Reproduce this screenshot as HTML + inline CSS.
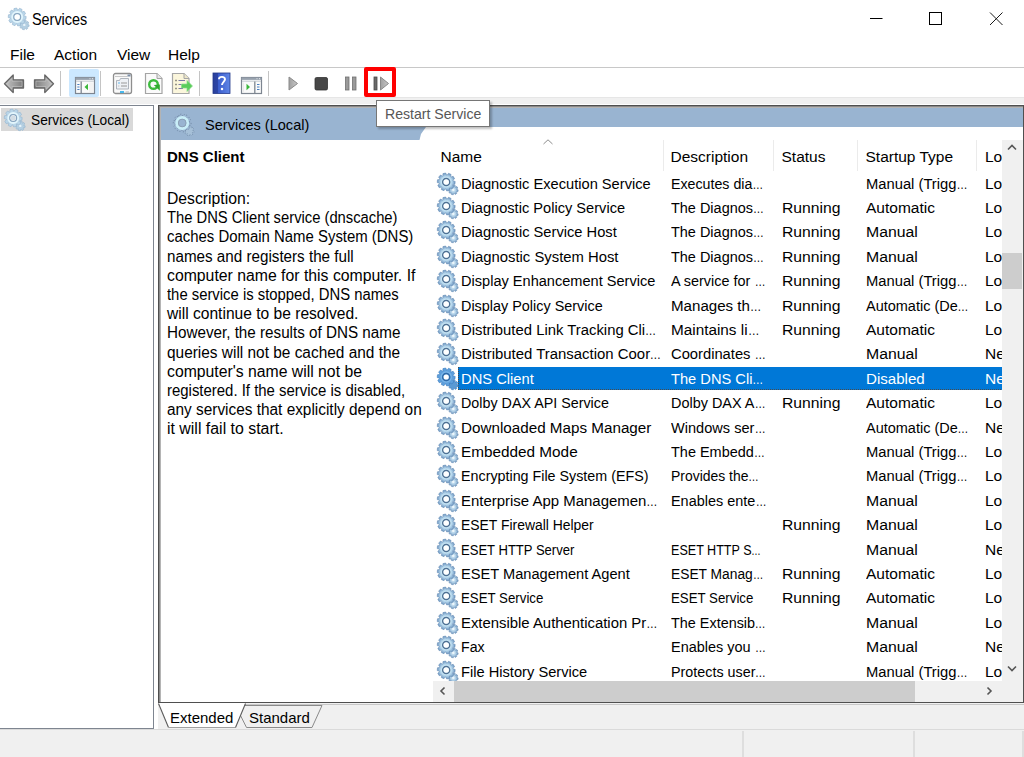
<!DOCTYPE html>
<html><head><meta charset="utf-8">
<style>
*{box-sizing:border-box;margin:0;padding:0}
html,body{width:1024px;height:757px;overflow:hidden;background:#fff;font-family:"Liberation Sans",sans-serif;color:#000}
.a{position:absolute;white-space:nowrap}
svg{position:absolute;overflow:visible}
/* title */
#title{left:31.5px;top:7.5px;font-size:16px;line-height:24px;transform:scaleX(0.9);transform-origin:0 50%}
.menu{top:45.5px;font-size:15.5px;line-height:17px;transform-origin:0 50%}
#menuline{left:0;top:67px;width:1024px;height:1px;background:#c8c8c8}
#band{left:0;top:97px;width:1024px;height:7px;background:#f0f0f0;border-top:1px solid #e6e6e6}
/* left pane */
#lpane{left:-1px;top:105px;width:155px;height:624px;border:1px solid #7e8590;background:#fff}
#lsel{left:1px;top:108px;width:132px;height:23px;background:#d9d9d9}
#ltext{left:31px;top:112px;font-size:14px;line-height:17px;transform:scaleX(.98);transform-origin:0 50%}
/* right pane */
#rpane{left:158px;top:105px;width:866px;height:598px;border:1px solid #4f4f4f;box-shadow:inset 1px 1px 0 #8a8a8a,inset 2px 2px 0 #b4b4b4;background:#fff}
#hdr{left:161px;top:108px;width:862px;height:19px;background:#99b4d1}
#hdr2{left:161px;top:127px;width:265px;height:13px;background:#99b4d1;clip-path:polygon(0 0,265px 0,260px 7px,258.5px 13px,0 13px)}
#hdrtext{left:205px;top:116.3px;font-size:15px;line-height:17px;transform:scaleX(.97);transform-origin:0 50%}
#dname{left:167px;top:147px;font-size:15px;font-weight:bold;line-height:19px}
#desc{left:166.5px;top:189px;font-size:16px;line-height:19.2px;white-space:pre}
#desc div{transform-origin:0 50%;height:19.2px}
/* list */
.r{position:absolute;left:433px;width:569px;height:24.4px;font-size:15.5px;line-height:24.4px;white-space:nowrap;overflow:hidden}
.r span{position:absolute;top:0}
.gi{left:4px;top:1px;width:21px;height:21px}
.c1{left:28px;transform-origin:0 50%}.c2{left:238px;transform-origin:0 50%}.c3{left:349px;transform-origin:0 50%}.c4{left:433px;transform-origin:0 50%}.c5{left:552px}
.r.sel span{color:#fff}
.e{font-style:normal;display:inline-block;transform:scaleX(.75);transform-origin:0 50%}
.selbg{position:absolute;left:25px;top:-0.5px;width:545px;height:24px;background:#0078d7;border:1px dotted #4a4a4a;border-right:none}
.hd{position:absolute;white-space:nowrap;top:146.5px;font-size:15.5px;line-height:19px;transform-origin:0 50%}
.dv{position:absolute;top:140px;width:1px;height:31px;background:#ebebeb}
/* scrollbars */
#vsb{left:1002px;top:140px;width:21px;height:562px;background:#f0f0f0}
#vthumb{left:1002px;top:253px;width:20px;height:36px;background:#cdcdcd}
#hsb{left:433px;top:681px;width:589px;height:21px;background:#f0f0f0}
#hthumb{left:454px;top:681px;width:461px;height:21px;background:#cdcdcd}
/* tabs */
#tabbar{left:158px;top:703px;width:866px;height:26px;background:#f0f0f0}
.tab{font-size:15px;line-height:17px}
/* status */
#status{left:0;top:729px;width:1024px;height:28px;background:#f0f0f0;border-top:1px solid #dadada}
.sdv{position:absolute;top:731px;width:2px;height:26px;background:#dedede}
/* tooltip */
#tip{left:376px;top:100px;width:114px;height:27px;background:#fff;border:1px solid #767676;box-shadow:2px 2px 2px rgba(0,0,0,.25)}
#tiptext{left:385px;top:106px;font-size:14.1px;line-height:17px;color:#575757}
</style></head><body>
<svg width="0" height="0" style="position:absolute">
<defs>
<radialGradient id="gg" cx="0.5" cy="0.5" r="0.5">
<stop offset="0" stop-color="#ffffff"/><stop offset="0.45" stop-color="#d2eef9"/><stop offset="0.7" stop-color="#a9cce6"/><stop offset="1" stop-color="#6d95bf"/>
</radialGradient>
<radialGradient id="gs" cx="0.5" cy="0.5" r="0.5">
<stop offset="0" stop-color="#e2f2fa"/><stop offset="0.6" stop-color="#a6c8e2"/><stop offset="1" stop-color="#6f96bf"/>
</radialGradient>
<g id="gear">
<path d="M19.76,16.37 L21.20,16.92 L20.82,18.79 L19.28,18.74 L19.12,18.97 L19.75,20.38 L18.16,21.43 L17.10,20.31 L16.83,20.36 L16.28,21.80 L14.41,21.42 L14.46,19.88 L14.23,19.72 L12.82,20.35 L11.77,18.76 L12.89,17.70 L12.84,17.43 L11.40,16.88 L11.78,15.01 L13.32,15.06 L13.48,14.83 L12.85,13.42 L14.44,12.37 L15.50,13.49 L15.77,13.44 L16.32,12.00 L18.19,12.38 L18.14,13.92 L18.37,14.08 L19.78,13.45 L20.83,15.04 L19.71,16.10Z" fill="url(#gs)" stroke="#6c92b9" stroke-width="0.6"/>
<path d="M15.99,7.75 L18.19,8.49 L17.90,11.29 L15.60,11.58 L15.43,11.97 L16.77,13.87 L14.90,15.97 L12.86,14.85 L12.49,15.07 L12.46,17.39 L9.71,17.99 L8.73,15.88 L8.30,15.84 L6.91,17.70 L4.33,16.57 L4.77,14.29 L4.45,14.00 L2.23,14.70 L0.81,12.26 L2.51,10.68 L2.41,10.25 L0.21,9.51 L0.50,6.71 L2.80,6.42 L2.97,6.03 L1.63,4.13 L3.50,2.03 L5.54,3.15 L5.91,2.93 L5.94,0.61 L8.69,0.01 L9.67,2.12 L10.10,2.16 L11.49,0.30 L14.07,1.43 L13.63,3.71 L13.95,4.00 L16.17,3.30 L17.59,5.74 L15.89,7.32Z" fill="url(#gg)" stroke="#6a90b8" stroke-width="0.6"/>
<circle cx="9.2" cy="9" r="3.5" fill="none" stroke="#4f7195" stroke-width="1.5"/>
<circle cx="9.2" cy="9" r="2.6" fill="#fff"/>
<circle cx="16.3" cy="16.9" r="1.1" fill="#eef7fb"/>
</g>
<g id="gearsel">
<path d="M19.76,16.37 L21.20,16.92 L20.82,18.79 L19.28,18.74 L19.12,18.97 L19.75,20.38 L18.16,21.43 L17.10,20.31 L16.83,20.36 L16.28,21.80 L14.41,21.42 L14.46,19.88 L14.23,19.72 L12.82,20.35 L11.77,18.76 L12.89,17.70 L12.84,17.43 L11.40,16.88 L11.78,15.01 L13.32,15.06 L13.48,14.83 L12.85,13.42 L14.44,12.37 L15.50,13.49 L15.77,13.44 L16.32,12.00 L18.19,12.38 L18.14,13.92 L18.37,14.08 L19.78,13.45 L20.83,15.04 L19.71,16.10Z" fill="#5b9ad4" stroke="#3a78b8" stroke-width="0.6"/>
<path d="M15.99,7.75 L18.19,8.49 L17.90,11.29 L15.60,11.58 L15.43,11.97 L16.77,13.87 L14.90,15.97 L12.86,14.85 L12.49,15.07 L12.46,17.39 L9.71,17.99 L8.73,15.88 L8.30,15.84 L6.91,17.70 L4.33,16.57 L4.77,14.29 L4.45,14.00 L2.23,14.70 L0.81,12.26 L2.51,10.68 L2.41,10.25 L0.21,9.51 L0.50,6.71 L2.80,6.42 L2.97,6.03 L1.63,4.13 L3.50,2.03 L5.54,3.15 L5.91,2.93 L5.94,0.61 L8.69,0.01 L9.67,2.12 L10.10,2.16 L11.49,0.30 L14.07,1.43 L13.63,3.71 L13.95,4.00 L16.17,3.30 L17.59,5.74 L15.89,7.32Z" fill="#5d9fdc" stroke="#3a7cc0" stroke-width="0.6"/>
<circle cx="9.2" cy="9" r="5" fill="none" stroke="#78b4e8" stroke-width="1.5"/>
<circle cx="9.2" cy="9" r="3.5" fill="none" stroke="#2f6aa8" stroke-width="1.5"/>
<circle cx="9.2" cy="9" r="2.6" fill="#fff"/>
</g>
<g id="tgear">
<path d="M19.76,16.37 L21.20,16.92 L20.82,18.79 L19.28,18.74 L19.12,18.97 L19.75,20.38 L18.16,21.43 L17.10,20.31 L16.83,20.36 L16.28,21.80 L14.41,21.42 L14.46,19.88 L14.23,19.72 L12.82,20.35 L11.77,18.76 L12.89,17.70 L12.84,17.43 L11.40,16.88 L11.78,15.01 L13.32,15.06 L13.48,14.83 L12.85,13.42 L14.44,12.37 L15.50,13.49 L15.77,13.44 L16.32,12.00 L18.19,12.38 L18.14,13.92 L18.37,14.08 L19.78,13.45 L20.83,15.04 L19.71,16.10Z" fill="#b4cfe2" stroke="#94b4cf" stroke-width="0.6"/>
<path d="M15.99,7.75 L18.19,8.49 L17.90,11.29 L15.60,11.58 L15.43,11.97 L16.77,13.87 L14.90,15.97 L12.86,14.85 L12.49,15.07 L12.46,17.39 L9.71,17.99 L8.73,15.88 L8.30,15.84 L6.91,17.70 L4.33,16.57 L4.77,14.29 L4.45,14.00 L2.23,14.70 L0.81,12.26 L2.51,10.68 L2.41,10.25 L0.21,9.51 L0.50,6.71 L2.80,6.42 L2.97,6.03 L1.63,4.13 L3.50,2.03 L5.54,3.15 L5.91,2.93 L5.94,0.61 L8.69,0.01 L9.67,2.12 L10.10,2.16 L11.49,0.30 L14.07,1.43 L13.63,3.71 L13.95,4.00 L16.17,3.30 L17.59,5.74 L15.89,7.32Z" fill="#b9d5e8" stroke="#93b3ce" stroke-width="0.6"/>
<circle cx="9.2" cy="9" r="4.9" fill="none" stroke="#e2f5fc" stroke-width="2"/>
<circle cx="9.2" cy="9" r="3.4" fill="none" stroke="#8aa6bf" stroke-width="1.2"/>
<circle cx="9.2" cy="9" r="2.7" fill="#fff"/>
<circle cx="16.3" cy="16.9" r="1.2" fill="#e8f4fa"/>
</g>
<g id="hgear">
<path d="M19.76,16.37 L21.20,16.92 L20.82,18.79 L19.28,18.74 L19.12,18.97 L19.75,20.38 L18.16,21.43 L17.10,20.31 L16.83,20.36 L16.28,21.80 L14.41,21.42 L14.46,19.88 L14.23,19.72 L12.82,20.35 L11.77,18.76 L12.89,17.70 L12.84,17.43 L11.40,16.88 L11.78,15.01 L13.32,15.06 L13.48,14.83 L12.85,13.42 L14.44,12.37 L15.50,13.49 L15.77,13.44 L16.32,12.00 L18.19,12.38 L18.14,13.92 L18.37,14.08 L19.78,13.45 L20.83,15.04 L19.71,16.10Z" fill="#a6c0d8" stroke="#7089a6" stroke-width="0.8" stroke-dasharray="1 1.2"/>
<path d="M15.99,7.75 L18.19,8.49 L17.90,11.29 L15.60,11.58 L15.43,11.97 L16.77,13.87 L14.90,15.97 L12.86,14.85 L12.49,15.07 L12.46,17.39 L9.71,17.99 L8.73,15.88 L8.30,15.84 L6.91,17.70 L4.33,16.57 L4.77,14.29 L4.45,14.00 L2.23,14.70 L0.81,12.26 L2.51,10.68 L2.41,10.25 L0.21,9.51 L0.50,6.71 L2.80,6.42 L2.97,6.03 L1.63,4.13 L3.50,2.03 L5.54,3.15 L5.91,2.93 L5.94,0.61 L8.69,0.01 L9.67,2.12 L10.10,2.16 L11.49,0.30 L14.07,1.43 L13.63,3.71 L13.95,4.00 L16.17,3.30 L17.59,5.74 L15.89,7.32Z" fill="#9ab5d1" stroke="#7089a6" stroke-width="0.9" stroke-dasharray="1.2 1.6"/>
<circle cx="9.2" cy="9" r="5.5" fill="none" stroke="#c9eef8" stroke-width="2.9"/>
<circle cx="9.2" cy="9" r="3.9" fill="#99b4d1" stroke="#8596a8" stroke-width="0.7"/>
</g>
</defs></svg>

<!-- title bar -->
<svg style="left:8px;top:8px" width="21" height="21"><use href="#tgear"/></svg>
<div class="a" id="title">Services</div>
<svg style="left:866px;top:10px" width="20" height="20"><path d="M4 8.5H16.5" stroke="#000" stroke-width="1"/></svg>
<svg style="left:926px;top:9px" width="20" height="20"><rect x="3.5" y="3.5" width="12" height="12" fill="none" stroke="#000" stroke-width="1"/></svg>
<svg style="left:986px;top:9px" width="20" height="20"><path d="M4 3.5L16.5 16M16.5 3.5L4 16" stroke="#1a1a1a" stroke-width="1"/></svg>

<!-- menu -->
<div class="a menu" style="left:10px">File</div>
<div class="a menu" style="left:54px">Action</div>
<div class="a menu" style="left:117px">View</div>
<div class="a menu" style="left:168px">Help</div>
<div class="a" id="menuline"></div>

<!-- toolbar -->
<!-- back/forward -->
<svg style="left:0;top:68px" width="60" height="30">
<defs>
<linearGradient id="ag" x1="0" y1="0" x2="1" y2="0"><stop offset="0" stop-color="#c4c4c4"/><stop offset="0.6" stop-color="#9a9a9a"/><stop offset="1" stop-color="#7a7a7a"/></linearGradient>
<linearGradient id="ag2" x1="1" y1="0" x2="0" y2="0"><stop offset="0" stop-color="#c4c4c4"/><stop offset="0.6" stop-color="#9a9a9a"/><stop offset="1" stop-color="#7a7a7a"/></linearGradient>
</defs>
<path d="M4.5 15.8L13.2 7V11.8H23.5V20H13.2V24.6Z" fill="url(#ag)" stroke="#666" stroke-width="1.3" stroke-linejoin="round"/>
<path d="M7 15.8L12 10.5V13.2H22V18.5H12V21Z" fill="none" stroke="#c8c8c8" stroke-width="0.7" opacity="0.8"/>
<path d="M53.5 15.8L44.8 7V11.8H34.5V20H44.8V24.6Z" fill="url(#ag2)" stroke="#666" stroke-width="1.3" stroke-linejoin="round"/>
<path d="M51 15.8L46 10.5V13.2H36V18.5H46V21Z" fill="none" stroke="#c8c8c8" stroke-width="0.7" opacity="0.8"/>
</svg>
<div class="a" style="left:60px;top:71px;width:1px;height:25px;background:#c4c4c4"></div>
<!-- highlighted show/hide tree -->
<div class="a" style="left:69px;top:69px;width:30px;height:28px;background:#cce8ff;border-radius:2px"></div>
<svg style="left:74px;top:76px" width="22" height="19">
<rect x="1.5" y="1.5" width="19" height="16" fill="#fafafa" stroke="#7d8590" stroke-width="1.2"/>
<rect x="1.5" y="1.5" width="19" height="2.4" fill="#98a2ae"/>
<path d="M15.5 2.7H16.5M18 2.7H19" stroke="#e8ecf0" stroke-width="1"/>
<path d="M2 5.2H20" stroke="#c2c8d0" stroke-width="1"/>
<path d="M7.2 5.5V17.5" stroke="#7d8590" stroke-width="1.3"/>
<path d="M3.3 8.5H5.5M3.3 11H5.5M3.3 13.5H5.5" stroke="#4a7fc1" stroke-width="1.1"/>
<path d="M10.5 11L14 7.8V14.2Z" fill="#3cb83c"/>
<path d="M16 6.5V16.5M18 6.5V16.5" stroke="#ececec" stroke-width="1"/>
</svg>
<div class="a" style="left:100px;top:71px;width:1px;height:25px;background:#c4c4c4"></div>
<!-- properties -->
<svg style="left:112px;top:72px" width="22" height="23">
<rect x="1.5" y="1.5" width="18" height="20" rx="2" fill="#f9f9f9" stroke="#8e8e8e" stroke-width="1.3"/>
<path d="M3 4.5H15.5" stroke="#c8c8c8" stroke-width="1"/>
<rect x="15.5" y="2.5" width="3" height="2" fill="#7d8fa8"/>
<path d="M4.5 8.5H7.5L8.5 6.5H16.5V17H4.5Z" fill="#eef1f5" stroke="#a6adb6" stroke-width="0.9"/>
<path d="M6.5 11H7.5" stroke="#35a6e8" stroke-width="1.6"/>
<path d="M9 11H15" stroke="#a8a8a8" stroke-width="1.2"/>
<path d="M6.5 14H7.2M9 14H15" stroke="#8a8a8a" stroke-width="0.9"/>
<path d="M8 20H12" stroke="#35b0ea" stroke-width="1.8"/>
<path d="M13.5 20H17" stroke="#c0c0c0" stroke-width="1.2"/>
</svg>
<!-- refresh -->
<svg style="left:144px;top:72px" width="20" height="23">
<path d="M1.5 1.5H13L18 6.5V21.5H1.5Z" fill="#fafafa" stroke="#a4a4a4" stroke-width="1.2"/>
<path d="M13 1.5V6.5H18" fill="#e6e6e6" stroke="#a4a4a4" stroke-width="1"/>
<circle cx="9.5" cy="12.5" r="4.3" fill="none" stroke="#3dbb3d" stroke-width="2.4"/>
<path d="M9.8 13L15.8 18.8L15.8 12.5Z" fill="#2faa2f"/>
</svg>
<!-- export -->
<svg style="left:171px;top:72px" width="24" height="23">
<path d="M1.5 1.5H13L18 6.5V21.5H1.5Z" fill="#fbf6dc" stroke="#a6a6a6" stroke-width="1.2"/>
<path d="M13 1.5V6.5H18" fill="#ece6c8" stroke="#a6a6a6" stroke-width="1"/>
<path d="M4.5 8.5H5.5M4.5 12.5H5.5M4.5 16.5H5.5" stroke="#333" stroke-width="1.4"/>
<path d="M7.5 8.5H14M7.5 12.5H12M7.5 16.5H12" stroke="#7a7aa8" stroke-width="1.2"/>
<path d="M10.5 12H16V8.5L21.5 14L16 19.5V16H10.5Z" fill="#5acd5a" stroke="#8adc8a" stroke-width="0.7"/>
</svg>
<div class="a" style="left:199px;top:71px;width:1px;height:25px;background:#c4c4c4"></div>
<!-- help -->
<svg style="left:212px;top:72px" width="19" height="22">
<defs><linearGradient id="hg" x1="0" y1="0" x2="1" y2="0"><stop offset="0" stop-color="#2a3f9a"/><stop offset="0.28" stop-color="#2c45a8"/><stop offset="0.3" stop-color="#3a5ccc"/><stop offset="1" stop-color="#5f86e6"/></linearGradient></defs>
<rect x="1" y="1" width="17" height="20.5" fill="url(#hg)" stroke="#22388a" stroke-width="0.8"/>
<path d="M7 7.2C7 4.3 13 4 13 7.3C13 9.8 10 10 10 13" fill="none" stroke="#fff" stroke-width="1.9"/>
<circle cx="10" cy="17" r="1.25" fill="#fff"/>
</svg>
<!-- show action pane -->
<svg style="left:240px;top:76px" width="23" height="19">
<rect x="1.5" y="1.5" width="20" height="16" fill="#fafafa" stroke="#7d8590" stroke-width="1.2"/>
<rect x="1.5" y="1.5" width="20" height="2.4" fill="#98a2ae"/>
<path d="M16.5 2.7H17.5M19 2.7H20" stroke="#e8ecf0" stroke-width="1"/>
<path d="M2 5.2H21" stroke="#c2c8d0" stroke-width="1"/>
<path d="M14.8 5.5V17.5" stroke="#7d8590" stroke-width="1.3"/>
<path d="M17 8.5H19.5M17 11H19.5M17 13.5H19.5" stroke="#4a7fc1" stroke-width="1.1"/>
<path d="M6.5 7.8L10 11L6.5 14.2Z" fill="#3cb83c"/>
<path d="M3.5 6.5V16.5" stroke="#ececec" stroke-width="1"/>
</svg>
<div class="a" style="left:268px;top:71px;width:1px;height:25px;background:#c4c4c4"></div>
<!-- play stop pause restart -->
<svg style="left:285px;top:72px" width="115" height="24">
<defs><linearGradient id="pg" x1="0" y1="0" x2="1" y2="0"><stop offset="0" stop-color="#a0a0a0"/><stop offset="1" stop-color="#c8c8c8"/></linearGradient></defs>
<path d="M4 5L12.5 11.5L4 18Z" fill="url(#pg)" stroke="#8a8a8a" stroke-width="1" stroke-linejoin="round"/>
<rect x="30" y="5.5" width="12.5" height="12.5" rx="1.5" fill="#474747" stroke="#333" stroke-width="0.8"/>
<rect x="60.5" y="5" width="3.5" height="13" fill="#9a9a9a" stroke="#707070" stroke-width="0.8"/>
<rect x="67.5" y="5" width="3.5" height="13" fill="#9a9a9a" stroke="#707070" stroke-width="0.8"/>
<rect x="89" y="5" width="3" height="13" fill="#6a6a6a" stroke="#4a4a4a" stroke-width="0.8"/>
<path d="M95.5 5L103.5 11.5L95.5 18Z" fill="url(#pg)" stroke="#8a8a8a" stroke-width="1" stroke-linejoin="round"/>
</svg>
<div class="a" style="left:364px;top:67px;width:32px;height:30px;border:4px solid #f00;border-radius:2px"></div>


<div class="a" id="band"></div>

<!-- left pane -->
<div class="a" id="lpane"></div>
<div class="a" id="lsel"></div>
<div class="a" style="left:154px;top:104px;width:4px;height:625px;background:#fff"></div>
<svg style="left:4px;top:109px" width="21" height="21"><use href="#tgear"/><circle cx="9.2" cy="9" r="2.6" fill="#d4dde4"/></svg>
<div class="a" id="ltext">Services (Local)</div>

<!-- right pane -->
<div class="a" id="rpane"></div>
<div class="a" id="hdr"></div>
<div class="a" id="hdr2"></div>
<svg style="left:173px;top:113.7px" width="22" height="22"><use href="#hgear"/></svg>
<div class="a" id="hdrtext">Services (Local)</div>

<div class="a" id="dname">DNS Client</div>
<div class="a" id="desc"><div style="transform:scaleX(0.9830396027304562)">Description:</div><div style="transform:scaleX(0.9224110429447853)">The DNS Client service (dnscache)</div><div style="transform:scaleX(0.9327491620791462)">caches Domain Name System (DNS)</div><div style="transform:scaleX(0.9500693436477435)">names and registers the full</div><div style="transform:scaleX(0.98707070812922)">computer name for this computer. If</div><div style="transform:scaleX(0.9275019162547024)">the service is stopped, DNS names</div><div style="transform:scaleX(0.9740115413529388)">will continue to be resolved.</div><div style="transform:scaleX(0.9507150428088261)">However, the results of DNS name</div><div style="transform:scaleX(0.9633662533341284)">queries will not be cached and the</div><div style="transform:scaleX(0.9854659898028048)">computer's name will not be</div><div style="transform:scaleX(0.9332239331948794)">registered. If the service is disabled,</div><div style="transform:scaleX(0.9609122745527806)">any services that explicitly depend on</div><div style="transform:scaleX(0.993284939823197)">it will fail to start.</div></div>

<!-- list header -->
<div class="hd" style="left:440.5px">Name</div>
<div class="hd" style="left:670.5px">Description</div>
<div class="hd" style="left:781.5px">Status</div>
<div class="hd" style="left:865.5px">Startup Type</div>
<div class="hd" style="left:985px;width:17px;overflow:hidden">Log On As</div>
<div class="dv" style="left:663px"></div>
<div class="dv" style="left:773px"></div>
<div class="dv" style="left:857px"></div>
<div class="dv" style="left:976px"></div>
<svg style="left:542px;top:138px" width="12" height="8"><path d="M1.5 6L6 1.8L10.5 6" fill="none" stroke="#8e8e8e" stroke-width="1"/></svg>

<div class="r" style="top:171.6px"><svg class="gi"><use href="#gear"/></svg><span class="c1" style="transform:scaleX(0.9449272075249101)">Diagnostic Execution Service</span><span class="c2" style="transform:scaleX(0.9166495666371394)">Executes dia<i class="e">…</i></span><span class="c3" style="transform:scaleX(1.0134585846160882)"></span><span class="c4" style="transform:scaleX(0.9519346500847519)">Manual (Trigg<i class="e">…</i></span><span class="c5">Local</span></div>
<div class="r" style="top:196.0px"><svg class="gi"><use href="#gear"/></svg><span class="c1" style="transform:scaleX(0.9428325688073393)">Diagnostic Policy Service</span><span class="c2" style="transform:scaleX(0.9328181063486058)">The Diagnos<i class="e">…</i></span><span class="c3" style="transform:scaleX(1.0134585846160882)">Running</span><span class="c4" style="transform:scaleX(1.0000883206868443)">Automatic</span><span class="c5">Local</span></div>
<div class="r" style="top:220.4px"><svg class="gi"><use href="#gear"/></svg><span class="c1" style="transform:scaleX(0.9466320270711845)">Diagnostic Service Host</span><span class="c2" style="transform:scaleX(0.9328181063486058)">The Diagnos<i class="e">…</i></span><span class="c3" style="transform:scaleX(1.0134585846160882)">Running</span><span class="c4" style="transform:scaleX(1.0204498977505112)">Manual</span><span class="c5">Local</span></div>
<div class="r" style="top:244.8px"><svg class="gi"><use href="#gear"/></svg><span class="c1" style="transform:scaleX(0.9572536530604282)">Diagnostic System Host</span><span class="c2" style="transform:scaleX(0.9328181063486058)">The Diagnos<i class="e">…</i></span><span class="c3" style="transform:scaleX(1.0134585846160882)">Running</span><span class="c4" style="transform:scaleX(1.0204498977505112)">Manual</span><span class="c5">Local</span></div>
<div class="r" style="top:269.2px"><svg class="gi"><use href="#gear"/></svg><span class="c1" style="transform:scaleX(0.9397987586717843)">Display Enhancement Service</span><span class="c2" style="transform:scaleX(0.9294715679917774)">A service for <i class="e">…</i></span><span class="c3" style="transform:scaleX(1.0134585846160882)">Running</span><span class="c4" style="transform:scaleX(0.9519346500847519)">Manual (Trigg<i class="e">…</i></span><span class="c5">Local</span></div>
<div class="r" style="top:293.6px"><svg class="gi"><use href="#gear"/></svg><span class="c1" style="transform:scaleX(0.9290819089363553)">Display Policy Service</span><span class="c2" style="transform:scaleX(0.9747801161432278)">Manages th<i class="e">…</i></span><span class="c3" style="transform:scaleX(1.0134585846160882)">Running</span><span class="c4" style="transform:scaleX(0.9345739058613538)">Automatic (De<i class="e">…</i></span><span class="c5">Local</span></div>
<div class="r" style="top:318.0px"><svg class="gi"><use href="#gear"/></svg><span class="c1" style="transform:scaleX(0.9584792200876414)">Distributed Link Tracking Cli<i class="e">…</i></span><span class="c2" style="transform:scaleX(0.9873640146598842)">Maintains li<i class="e">…</i></span><span class="c3" style="transform:scaleX(1.0134585846160882)">Running</span><span class="c4" style="transform:scaleX(1.0000883206868443)">Automatic</span><span class="c5">Local</span></div>
<div class="r" style="top:342.4px"><svg class="gi"><use href="#gear"/></svg><span class="c1" style="transform:scaleX(0.9629012969594218)">Distributed Transaction Coor<i class="e">…</i></span><span class="c2" style="transform:scaleX(0.9508280575660143)">Coordinates <i class="e">…</i></span><span class="c3" style="transform:scaleX(1.0134585846160882)"></span><span class="c4" style="transform:scaleX(1.0204498977505112)">Manual</span><span class="c5">Network</span></div>
<div class="r sel" style="top:366.8px"><div class="selbg"></div><svg class="gi"><use href="#gearsel"/></svg><span class="c1" style="transform:scaleX(0.9496768426658323)">DNS Client</span><span class="c2" style="transform:scaleX(0.9449198693394247)">The DNS Cli<i class="e">…</i></span><span class="c3" style="transform:scaleX(1.0134585846160882)"></span><span class="c4" style="transform:scaleX(0.9742463953963935)">Disabled</span><span class="c5">Network</span></div>
<div class="r" style="top:391.2px"><svg class="gi"><use href="#gear"/></svg><span class="c1" style="transform:scaleX(0.9229250965250965)">Dolby DAX API Service</span><span class="c2" style="transform:scaleX(0.9304001110167445)">Dolby DAX A<i class="e">…</i></span><span class="c3" style="transform:scaleX(1.0134585846160882)">Running</span><span class="c4" style="transform:scaleX(1.0000883206868443)">Automatic</span><span class="c5">Local</span></div>
<div class="r" style="top:415.6px"><svg class="gi"><use href="#gear"/></svg><span class="c1" style="transform:scaleX(0.9818422418516053)">Downloaded Maps Manager</span><span class="c2" style="transform:scaleX(0.9396855412664126)">Windows ser<i class="e">…</i></span><span class="c3" style="transform:scaleX(1.0134585846160882)"></span><span class="c4" style="transform:scaleX(0.9345739058613538)">Automatic (De<i class="e">…</i></span><span class="c5">Network</span></div>
<div class="r" style="top:440.0px"><svg class="gi"><use href="#gear"/></svg><span class="c1" style="transform:scaleX(0.9881319516619652)">Embedded Mode</span><span class="c2" style="transform:scaleX(0.9329320287415546)">The Embedd<i class="e">…</i></span><span class="c3" style="transform:scaleX(1.0134585846160882)"></span><span class="c4" style="transform:scaleX(0.9519346500847519)">Manual (Trigg<i class="e">…</i></span><span class="c5">Local</span></div>
<div class="r" style="top:464.4px"><svg class="gi"><use href="#gear"/></svg><span class="c1" style="transform:scaleX(0.9221610140998897)">Encrypting File System (EFS)</span><span class="c2" style="transform:scaleX(0.898502171008985)">Provides the<i class="e">…</i></span><span class="c3" style="transform:scaleX(1.0134585846160882)"></span><span class="c4" style="transform:scaleX(0.9519346500847519)">Manual (Trigg<i class="e">…</i></span><span class="c5">Local</span></div>
<div class="r" style="top:488.8px"><svg class="gi"><use href="#gear"/></svg><span class="c1" style="transform:scaleX(0.9646656776646889)">Enterprise App Managemen<i class="e">…</i></span><span class="c2" style="transform:scaleX(0.930639808993323)">Enables ente<i class="e">…</i></span><span class="c3" style="transform:scaleX(1.0134585846160882)"></span><span class="c4" style="transform:scaleX(1.0204498977505112)">Manual</span><span class="c5">Local</span></div>
<div class="r" style="top:513.2px"><svg class="gi"><use href="#gear"/></svg><span class="c1" style="transform:scaleX(0.8974634929490576)">ESET Firewall Helper</span><span class="c2" style="transform:scaleX(1.0)"></span><span class="c3" style="transform:scaleX(1.0134585846160882)">Running</span><span class="c4" style="transform:scaleX(1.0204498977505112)">Manual</span><span class="c5">Local</span></div>
<div class="r" style="top:537.6px"><svg class="gi"><use href="#gear"/></svg><span class="c1" style="transform:scaleX(0.8415261705301894)">ESET HTTP Server</span><span class="c2" style="transform:scaleX(0.8110476638491493)">ESET HTTP S<i class="e">…</i></span><span class="c3" style="transform:scaleX(1.0134585846160882)"></span><span class="c4" style="transform:scaleX(1.0204498977505112)">Manual</span><span class="c5">Network</span></div>
<div class="r" style="top:562.0px"><svg class="gi"><use href="#gear"/></svg><span class="c1" style="transform:scaleX(0.9429424223179019)">ESET Management Agent</span><span class="c2" style="transform:scaleX(0.8899938690458122)">ESET Manag<i class="e">…</i></span><span class="c3" style="transform:scaleX(1.0134585846160882)">Running</span><span class="c4" style="transform:scaleX(1.0000883206868443)">Automatic</span><span class="c5">Local</span></div>
<div class="r" style="top:586.4px"><svg class="gi"><use href="#gear"/></svg><span class="c1" style="transform:scaleX(0.8560180555555557)">ESET Service</span><span class="c2" style="transform:scaleX(0.8565361634993491)">ESET Service</span><span class="c3" style="transform:scaleX(1.0134585846160882)">Running</span><span class="c4" style="transform:scaleX(1.0000883206868443)">Automatic</span><span class="c5">Local</span></div>
<div class="r" style="top:610.8px"><svg class="gi"><use href="#gear"/></svg><span class="c1" style="transform:scaleX(0.9596126224125895)">Extensible Authentication Pr<i class="e">…</i></span><span class="c2" style="transform:scaleX(0.9291937755904519)">The Extensib<i class="e">…</i></span><span class="c3" style="transform:scaleX(1.0134585846160882)"></span><span class="c4" style="transform:scaleX(1.0204498977505112)">Manual</span><span class="c5">Local</span></div>
<div class="r" style="top:635.2px"><svg class="gi"><use href="#gear"/></svg><span class="c1" style="transform:scaleX(0.9127482142857143)">Fax</span><span class="c2" style="transform:scaleX(0.933616969570163)">Enables you <i class="e">…</i></span><span class="c3" style="transform:scaleX(1.0134585846160882)"></span><span class="c4" style="transform:scaleX(1.0204498977505112)">Manual</span><span class="c5">Network</span></div>
<div class="r" style="top:659.6px"><svg class="gi"><use href="#gear"/></svg><span class="c1" style="transform:scaleX(0.9457447682342601)">File History Service</span><span class="c2" style="transform:scaleX(0.9242807998744614)">Protects user<i class="e">…</i></span><span class="c3" style="transform:scaleX(1.0134585846160882)"></span><span class="c4" style="transform:scaleX(0.9519346500847519)">Manual (Trigg<i class="e">…</i></span><span class="c5">Local</span></div>

<!-- scrollbars -->
<div class="a" id="vsb"></div>
<div class="a" id="vthumb"></div>
<svg style="left:1002px;top:140px" width="21" height="16"><path d="M8 13.5L12 9.5L16 13.5" fill="none" stroke="#555" stroke-width="1.6" transform="translate(-2,-4)"/></svg>
<svg style="left:1002px;top:660px" width="21" height="16"><path d="M6 6.5L10 10.5L14 6.5" fill="none" stroke="#555" stroke-width="1.6"/></svg>
<div class="a" id="hsb"></div>
<div class="a" id="hthumb"></div>
<svg style="left:433px;top:681px" width="20" height="20"><path d="M11.5 6.5L8 10L11.5 13.5" fill="none" stroke="#555" stroke-width="1.6"/></svg>
<svg style="left:980px;top:681px" width="20" height="20"><path d="M7.5 6.5L11 10L7.5 13.5" fill="none" stroke="#555" stroke-width="1.6"/></svg>

<!-- tabs -->
<div class="a" id="tabbar"></div>
<svg style="left:0;top:0" width="1024" height="757">
<path d="M158 704.5H1024" stroke="#c8c8c8" stroke-width="1" fill="none"/>
<path d="M244.5 705.5H322L312 727.5H246.5L240.5 715.5Z" fill="#f0f0f0" stroke="none"/>
<path d="M240.5 715.5L246.5 727.5H312L322 705.5H244.5" fill="none" stroke="#8a8a8a" stroke-width="1"/>
<path d="M158 703L168.3 727.5H235.5L245.5 703Z" fill="#fff" stroke="none"/>
<path d="M158.5 703.5L168.5 727.5" stroke="#5a5a5a" stroke-width="1.1" fill="none"/>
<path d="M168.5 727.5H235.5" stroke="#a0a0a0" stroke-width="1" fill="none"/>
<path d="M235.5 727.5L245.5 703.5" stroke="#5a5a5a" stroke-width="1.1" fill="none"/>
</svg>
<div class="a tab" style="left:170px;top:709px">Extended</div>
<div class="a tab" style="left:249px;top:709px">Standard</div>

<!-- status -->
<div class="a" id="status"></div>
<div class="sdv" style="left:742px"></div>
<div class="sdv" style="left:913px"></div>
<div class="sdv" style="left:1022px"></div>

<!-- tooltip -->
<div class="a" id="tip"></div>
<div class="a" id="tiptext">Restart Service</div>
</body></html>
